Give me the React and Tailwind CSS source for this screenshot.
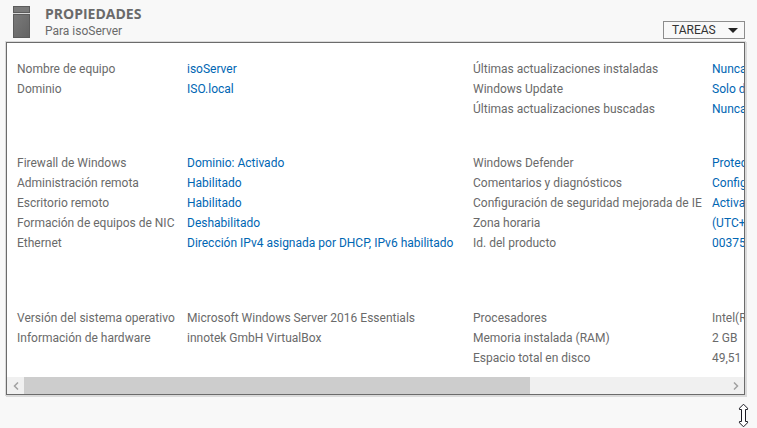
const groups = [
  {
    className: 'pt-4 pb-[34px]',
    left: [
      ['Nombre de equipo', 'isoServer'],
      ['Dominio', 'ISO.local'],
    ],
    right: [
      ['Últimas actualizaciones instaladas', 'Nunca'],
      ['Windows Update', 'Solo d'],
      ['Últimas actualizaciones buscadas', 'Nunca'],
    ],
    linked: true,
  },
  {
    className: 'pb-[55px]',
    left: [
      ['Firewall de Windows', 'Dominio: Activado'],
      ['Administración remota', 'Habilitado'],
      ['Escritorio remoto', 'Habilitado'],
      ['Formación de equipos de NIC', 'Deshabilitado'],
      ['Ethernet', 'Dirección IPv4 asignada por DHCP, IPv6 habilitado'],
    ],
    right: [
      ['Windows Defender', 'Protec'],
      ['Comentarios y diagnósticos', 'Config'],
      ['Configuración de seguridad mejorada de IE', 'Activa'],
      ['Zona horaria', '(UTC+'],
      ['Id. del producto', '00375'],
    ],
    linked: true,
  },
  {
    className: 'pb-[9px]',
    left: [
      ['Versión del sistema operativo', 'Microsoft Windows Server 2016 Essentials'],
      ['Información de hardware', 'innotek GmbH VirtualBox'],
    ],
    right: [
      ['Procesadores', 'Intel(R'],
      ['Memoria instalada (RAM)', '2 GB'],
      ['Espacio total en disco', '49,51'],
    ],
    linked: false,
  },
];

function PropertyList({ rows, linked, className }) {
  return (
    <dl className={className}>
      {rows.map(([label, value]) => (
        <div key={label} className="contents">
          <dt>{label}</dt>
          <dd>
            {linked ? (
              <a href="#" className="text-[#0066b3]">
                {value}
              </a>
            ) : (
              value
            )}
          </dd>
        </div>
      ))}
    </dl>
  );
}

function ServerIcon() {
  return (
    <svg width="17" height="32" viewBox="0 0 17 32" shapeRendering="crispEdges" aria-hidden="true">
      <defs>
        <linearGradient id="tower" x1="0" y1="0" x2="1" y2="1">
          <stop offset="0" stopColor="#7a7a7a" />
          <stop offset="1" stopColor="#636363" />
        </linearGradient>
      </defs>
      <rect x="0.5" y="0.5" width="16" height="6" fill="#7a7a7a" stroke="#5c5c5c" />
      <rect x="0" y="7" width="17" height="1" fill="#d8d8d8" />
      <rect x="0.5" y="8.5" width="16" height="23" fill="url(#tower)" stroke="#5c5c5c" />
    </svg>
  );
}

function ScrollButton({ label, path }) {
  return (
    <button type="button" aria-label={label} className="flex h-[17px] w-[17px] shrink-0 items-center justify-center">
      <svg width="6" height="8" viewBox="0 0 6 8" fill="none" stroke="#a0a0a0" strokeWidth="1.5" aria-hidden="true">
        <path d={path} />
      </svg>
    </button>
  );
}

function ResizeCursor() {
  return (
    <svg width="11" height="25" viewBox="0 0 11 25" fill="#fff" stroke="#1a1a22" strokeWidth="1" aria-hidden="true">
      <path d="M5.5 1.2 L9.5 5.2 V6.5 H7.5 V18.5 H9.5 V19.8 L5.5 23.8 L1.5 19.8 V18.5 H3.5 V6.5 H1.5 V5.2 Z" />
    </svg>
  );
}

export default function App() {
  return (
    <main className="min-h-screen bg-[#f8f8f8] font-['Roboto','Open_Sans',sans-serif] text-xs leading-5 text-[#6a6a6a]">
      <header className="flex items-start pt-1.5 pr-3 pl-[13px]">
        <ServerIcon />
        <div className="ml-[15px] pb-px">
          <h1 className="font-['Open_Sans',sans-serif] text-sm leading-4 font-bold">PROPIEDADES</h1>
          <p className="leading-[19px]">Para isoServer</p>
        </div>
        <button
          type="button"
          aria-haspopup="menu"
          className="mt-[15px] ml-auto flex h-[18px] w-[82px] items-center justify-between border border-[#8c8c8c] pr-1.5 pl-2 text-[#333]"
        >
          TAREAS
          <svg width="10" height="5" viewBox="0 0 10 5" fill="#222" aria-hidden="true">
            <path d="M0 0H10L5 5Z" />
          </svg>
        </button>
      </header>

      <section
        aria-label="Propiedades"
        className="mr-3 ml-1.5 overflow-hidden border border-[#6b6b6b] bg-white shadow-[0_0_0_1px_#dadada,1px_1px_0_1px_#dadada]"
      >
        <div className="overflow-hidden pl-2.5 whitespace-nowrap">
          {groups.map((group) => (
            <div key={group.left[0][0]} className={`grid grid-cols-[456px_1fr] items-start ${group.className}`}>
              <PropertyList rows={group.left} linked={group.linked} className="grid grid-cols-[170px_1fr]" />
              <PropertyList rows={group.right} linked={group.linked} className="grid grid-cols-[239px_1fr]" />
            </div>
          ))}
        </div>
        <div className="flex h-[17px] bg-[#f0f0f0]">
          <ScrollButton label="Desplazar a la izquierda" path="M5 0.5L1.5 4L5 7.5" />
          <div className="flex-1">
            <div className="h-full w-[72%] bg-[#cdcdcd]" />
          </div>
          <ScrollButton label="Desplazar a la derecha" path="M1 0.5L4.5 4L1 7.5" />
        </div>
      </section>

      <div className="flex justify-end pt-2 pr-2">
        <ResizeCursor />
      </div>
    </main>
  );
}
